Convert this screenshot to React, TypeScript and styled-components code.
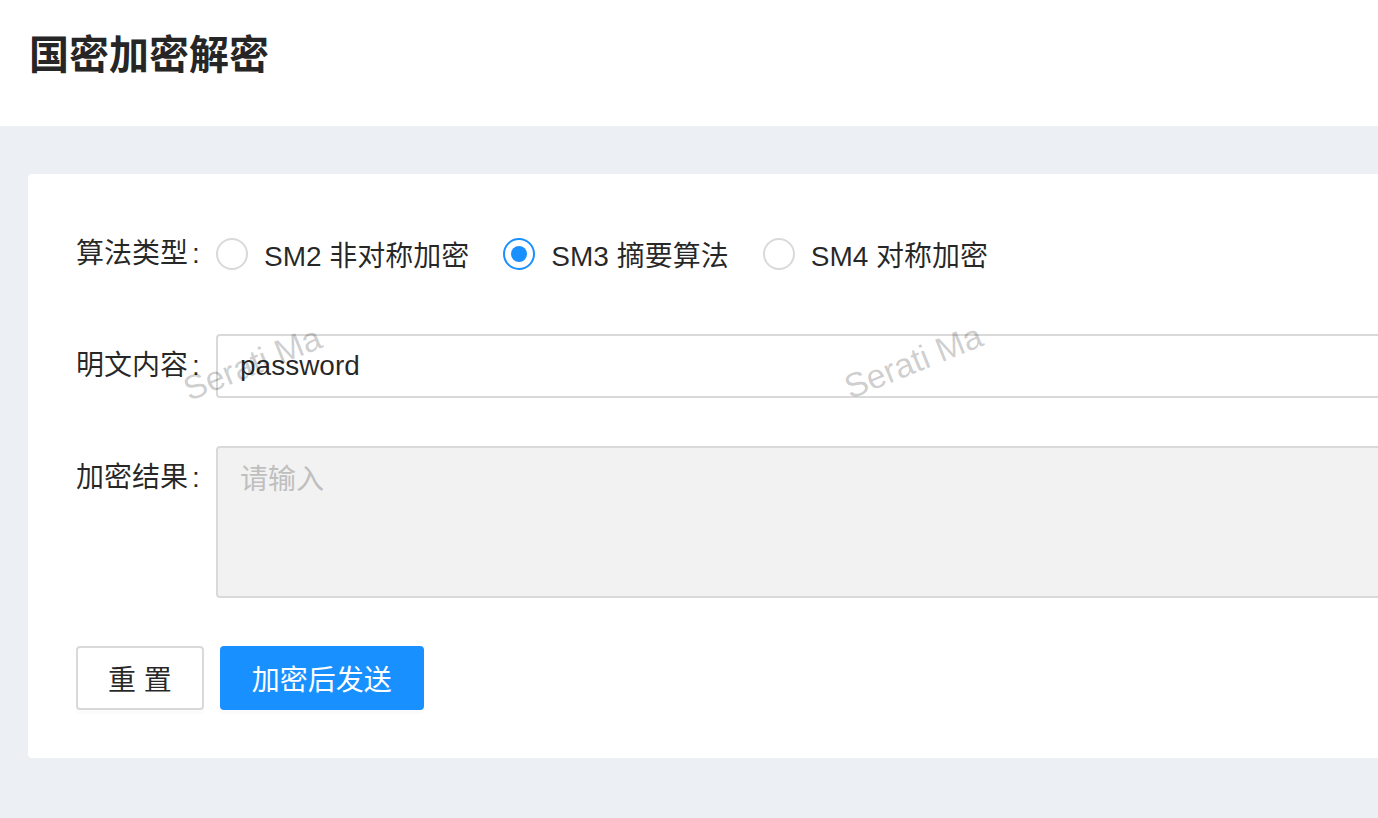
import styled, { createGlobalStyle } from 'styled-components';

const GlobalStyle = createGlobalStyle`
  html, body {
    margin: 0;
    padding: 0;
    overflow: hidden;
    background: #ffffff;
  }
  body {
    font-family: 'Liberation Sans', 'Noto Sans CJK SC', sans-serif;
    color: rgba(0, 0, 0, 0.85);
  }
`;

const options = [
  { value: 'sm2', label: 'SM2 非对称加密' },
  { value: 'sm3', label: 'SM3 摘要算法' },
  { value: 'sm4', label: 'SM4 对称加密' },
];

export default function App() {
  const selected = 'sm3';

  return (
    <Page>
      <GlobalStyle />
      <Header>
        <Title>国密加密解密</Title>
      </Header>
      <Content>
        <Card>
          <FormRow>
            <Label>算法类型</Label>
            <RadioGroup>
              {options.map((o) => (
                <RadioItem key={o.value}>
                  <RadioCircle checked={o.value === selected} />
                  <RadioText>{o.label}</RadioText>
                </RadioItem>
              ))}
            </RadioGroup>
          </FormRow>
          <FormRow>
            <Label>明文内容</Label>
            <Input defaultValue='password' />
          </FormRow>
          <FormRow>
            <Label>加密结果</Label>
            <TextArea placeholder='请输入' disabled />
          </FormRow>
          <Actions>
            <Button>
              <span>重置</span>
            </Button>
            <Button primary>加密后发送</Button>
          </Actions>
        </Card>
      </Content>
      <Watermark left={191} top={372}>Serati Ma</Watermark>
      <Watermark left={852} top={370}>Serati Ma</Watermark>
    </Page>
  );
}

const Page = styled.div`
  position: relative;
  width: 100%;
  min-height: 818px;
  background: #ecf0f4;
`;

const Header = styled.div`
  height: 126px;
  background: #ffffff;
  padding: 0 29px;
  box-sizing: border-box;
`;

const Title = styled.h1`
  margin: 0;
  padding-top: 27px;
  font-size: 40px;
  line-height: 56px;
  font-weight: 700;
  color: #262626;
`;

const Content = styled.div`
  padding: 48px 0 48px 28px;
`;

const Card = styled.div`
  width: 1450px;
  background: #ffffff;
  padding: 48px;
  box-sizing: border-box;
  border-radius: 4px;
  display: flex;
  flex-direction: column;
  gap: 48px;
`;

const FormRow = styled.div`
  display: flex;
  align-items: flex-start;
`;

const Label = styled.label`
  width: 140px;
  flex-shrink: 0;
  height: 64px;
  line-height: 64px;
  font-size: 28px;
  color: rgba(0, 0, 0, 0.85);
  &::after {
    content: ':';
    margin: 0 16px 0 4px;
  }
`;

const RadioGroup = styled.div`
  display: flex;
  align-items: center;
  height: 64px;
`;

const RadioItem = styled.label`
  display: flex;
  align-items: center;
  margin-right: 18px;
  font-size: 28px;
  cursor: pointer;
`;

const RadioCircle = styled.span<{ checked?: boolean }>`
  position: relative;
  width: 32px;
  height: 32px;
  box-sizing: border-box;
  border-radius: 50%;
  border: 2px solid ${({ checked }) => (checked ? '#1890ff' : '#d9d9d9')};
  background: #ffffff;
  &::after {
    content: '';
    position: absolute;
    left: 6px;
    top: 6px;
    width: 16px;
    height: 16px;
    border-radius: 50%;
    background: #1890ff;
    display: ${({ checked }) => (checked ? 'block' : 'none')};
  }
`;

const RadioText = styled.span`
  padding: 0 16px;
  color: rgba(0, 0, 0, 0.85);
`;

const Input = styled.input`
  flex: 1;
  height: 64px;
  box-sizing: border-box;
  border: 2px solid #d9d9d9;
  border-radius: 4px;
  padding: 8px 22px;
  font-family: inherit;
  font-size: 28px;
  color: rgba(0, 0, 0, 0.85);
  outline: none;
`;

const TextArea = styled.textarea`
  flex: 1;
  height: 152px;
  box-sizing: border-box;
  border: 2px solid #d9d9d9;
  border-radius: 4px;
  padding: 10px 22px;
  font-family: inherit;
  font-size: 28px;
  line-height: 44px;
  background: #f2f2f2;
  resize: none;
  outline: none;
  &::placeholder {
    color: #bfbfbf;
  }
`;

const Actions = styled.div`
  display: flex;
  gap: 16px;
`;

const Button = styled.button<{ primary?: boolean }>`
  height: 64px;
  padding: 0 30px;
  box-sizing: border-box;
  border-radius: 4px;
  font-family: inherit;
  font-size: 28px;
  white-space: nowrap;
  border: 2px solid ${({ primary }) => (primary ? '#1890ff' : '#d9d9d9')};
  background: ${({ primary }) => (primary ? '#1890ff' : '#ffffff')};
  color: ${({ primary }) => (primary ? '#ffffff' : 'rgba(0, 0, 0, 0.85)')};
  box-shadow: 0 4px 0 rgba(0, 0, 0, 0.015);
  cursor: pointer;
  & > span {
    letter-spacing: 0.28em;
    margin-right: -0.28em;
  }
`;

const Watermark = styled.div<{ left: number; top: number }>`
  position: absolute;
  left: ${({ left }) => left}px;
  top: ${({ top }) => top}px;
  font-family: 'Liberation Sans', sans-serif;
  font-size: 34px;
  line-height: 1;
  color: rgba(0, 0, 0, 0.2);
  transform: rotate(-22deg);
  transform-origin: left bottom;
  white-space: nowrap;
  pointer-events: none;
  z-index: 10;
`;
